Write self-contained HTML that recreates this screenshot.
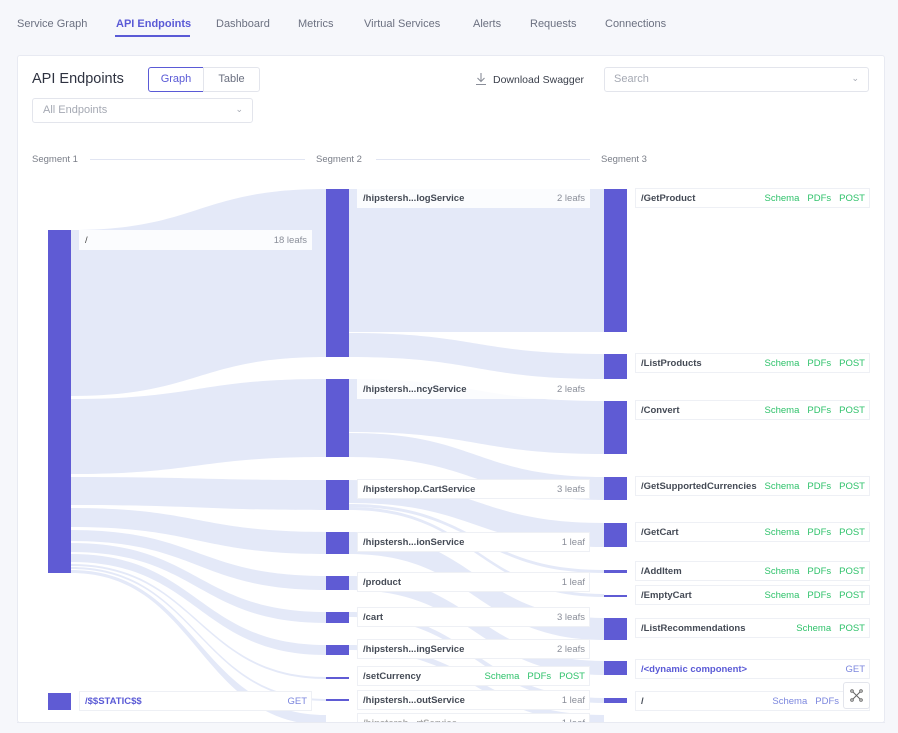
<!DOCTYPE html>
<html><head><meta charset="utf-8">
<style>
*{box-sizing:border-box;margin:0;padding:0}
body{width:898px;height:733px;overflow:hidden;background:#f6f7fb;font-family:"Liberation Sans",sans-serif;position:relative;color:#3a3f4b}
.nav{position:absolute;top:18px;font-size:11px;color:#6b7080}
.nav.on{color:#5a5ad6;font-weight:bold}
.ul{position:absolute;left:115px;top:35px;width:75px;height:2px;background:#5a5ad6}
.card{position:absolute;left:17px;top:55px;width:868px;height:668px;background:#fff;border:1px solid #e8eaf2;border-radius:3px;overflow:hidden}
.a{position:absolute}
.bar{position:absolute;background:#5f5bd4}
.lbl{position:absolute;height:20px;background:#fff;border:1px solid #eef0f5;font-size:9.5px;font-weight:bold;color:#444a55;padding:0 4px 0 5px;display:flex;align-items:center;justify-content:space-between;white-space:nowrap}
.lbl.t{background:rgba(255,255,255,.85);border-color:transparent}
.lbl span.r{font-weight:normal;color:#8a8e99}
.g{font-weight:normal;color:#2fc26b;margin-left:8px}
.b{font-weight:normal;color:#7b86de;margin-left:8px}
.seg{position:absolute;top:154px;font-size:9.5px;color:#7a7e88}
.line{position:absolute;top:159px;height:1px;background:#e1e5f2}
</style></head><body>
<div class="nav" style="left:17px">Service Graph</div>
<div class="nav on" style="left:116px">API Endpoints</div>
<div class="ul"></div>
<div class="nav" style="left:216px">Dashboard</div>
<div class="nav" style="left:298px">Metrics</div>
<div class="nav" style="left:364px">Virtual Services</div>
<div class="nav" style="left:473px">Alerts</div>
<div class="nav" style="left:530px">Requests</div>
<div class="nav" style="left:605px">Connections</div>

<div class="card"></div>
<div class="a" style="left:32px;top:71px;font-size:14.5px;color:#2e3240">API Endpoints</div>
<div class="a" style="left:148px;top:67px;width:56px;height:25px;border:1px solid #5a5ad6;border-radius:3px 0 0 3px;color:#5a5ad6;font-size:11px;text-align:center;line-height:23px">Graph</div>
<div class="a" style="left:203px;top:67px;width:57px;height:25px;border:1px solid #e3e5ec;border-radius:0 3px 3px 0;color:#6b7080;font-size:11px;text-align:center;line-height:23px">Table</div>
<div class="a" style="left:32px;top:98px;width:221px;height:25px;border:1px solid #e3e5ec;border-radius:3px;color:#a5a9b3;font-size:11px;line-height:23px;padding-left:10px">All Endpoints<span style="position:absolute;right:9px;top:-1px;font-size:9px">&#8964;</span></div>
<svg class="a" style="left:474px;top:72px" width="14" height="14" viewBox="0 0 14 14"><path d="M7 1v8M3.5 6l3.5 3.5L10.5 6M2 12.5h10" stroke="#8a8e99" stroke-width="1.1" fill="none"/></svg>
<div class="a" style="left:493px;top:74px;font-size:10.5px;color:#3a3f4b">Download Swagger</div>
<div class="a" style="left:604px;top:67px;width:265px;height:25px;border:1px solid #e3e5ec;border-radius:3px;color:#a5a9b3;font-size:11px;line-height:23px;padding-left:9px">Search<span style="position:absolute;right:9px;top:-1px;font-size:9px">&#8964;</span></div>

<div class="seg" style="left:32px">Segment 1</div>
<div class="line" style="left:90px;width:215px"></div>
<div class="seg" style="left:316px">Segment 2</div>
<div class="line" style="left:376px;width:214px"></div>
<div class="seg" style="left:601px">Segment 3</div>

<svg class="a" style="left:0;top:0" width="898" height="723" viewBox="0 0 898 723">
<g fill="#e4e9f8">
<path d="M71 230C198 230 198 189 326 189L326 357C198 357 198 396 71 396Z"/>
<path d="M71 399C198 399 198 379 326 379L326 457C198 457 198 474 71 474Z"/>
<path d="M71 477C198 477 198 480 326 480L326 510C198 510 198 505 71 505Z"/>
<path d="M71 508C198 508 198 532 326 532L326 554C198 554 198 527 71 527Z"/>
<path d="M71 530C198 530 198 576 326 576L326 590C198 590 198 541 71 541Z"/>
<path d="M71 543C198 543 198 612 326 612L326 623C198 623 198 552 71 552Z"/>
<path d="M71 554C198 554 198 645 326 645L326 655C198 655 198 562 71 562Z"/>
<path d="M71 564C198 564 198 677 326 677L326 679C198 679 198 566 71 566Z"/>
<path d="M71 567C198 567 198 699 326 699L326 701C198 701 198 569 71 569Z"/>
<path d="M71 570C198 570 198 715 326 715L326 725C198 725 198 573 71 573Z"/>
<path d="M349 189L604 189L604 332L349 332Z"/>
<path d="M349 333C476 333 476 354 604 354L604 379C476 379 476 357 349 357Z"/>
<path d="M349 379C476 379 476 401 604 401L604 454C476 454 476 432 349 432Z"/>
<path d="M349 433C476 433 476 477 604 477L604 500C476 500 476 457 349 457Z"/>
<path d="M349 480C476 480 476 523 604 523L604 547C476 547 476 503 349 503Z"/>
<path d="M349 504C476 504 476 570 604 570L604 573C476 573 476 507 349 507Z"/>
<path d="M349 507C476 507 476 594 604 594L604 597C476 597 476 510 349 510Z"/>
<path d="M349 532C476 532 476 618 604 618L604 640C476 640 476 554 349 554Z"/>
<path d="M349 576C476 576 476 661 604 661L604 675C476 675 476 590 349 590Z"/>
<path d="M349 612C476 612 476 698 604 698L604 703C476 703 476 617 349 617Z"/>
<path d="M349 645C476 645 476 715 604 715L604 723C476 723 476 650 349 650Z"/>
</g>
<rect x="886" y="0" width="12" height="723" fill="#f6f7fb"/>
<rect x="0" y="723" width="898" height="10" fill="#f6f7fb"/>
</svg>

<div class="bar" style="left:48px;top:230px;width:23px;height:343px"></div>
<div class="bar" style="left:48px;top:693px;width:23px;height:17px"></div>
<div class="lbl t" style="left:79px;top:230px;width:233px;font-weight:normal;color:#444">/<span class="r">18 leafs</span></div>
<div class="lbl" style="left:79px;top:691px;width:233px;color:#5a5ad6">/$$STATIC$$<span class="b">GET</span></div>

<div class="bar" style="left:326px;top:189px;width:23px;height:168px"></div>
<div class="bar" style="left:326px;top:379px;width:23px;height:78px"></div>
<div class="bar" style="left:326px;top:480px;width:23px;height:30px"></div>
<div class="bar" style="left:326px;top:532px;width:23px;height:22px"></div>
<div class="bar" style="left:326px;top:576px;width:23px;height:14px"></div>
<div class="bar" style="left:326px;top:612px;width:23px;height:11px"></div>
<div class="bar" style="left:326px;top:645px;width:23px;height:10px"></div>
<div class="bar" style="left:326px;top:677px;width:23px;height:2px"></div>
<div class="bar" style="left:326px;top:699px;width:23px;height:2px"></div>

<div class="lbl t" style="left:357px;top:188px;width:233px">/hipstersh...logService<span class="r">2 leafs</span></div>
<div class="lbl t" style="left:357px;top:379px;width:233px">/hipstersh...ncyService<span class="r">2 leafs</span></div>
<div class="lbl" style="left:357px;top:479px;width:233px">/hipstershop.CartService<span class="r">3 leafs</span></div>
<div class="lbl" style="left:357px;top:532px;width:233px">/hipstersh...ionService<span class="r">1 leaf</span></div>
<div class="lbl" style="left:357px;top:572px;width:233px">/product<span class="r">1 leaf</span></div>
<div class="lbl" style="left:357px;top:607px;width:233px">/cart<span class="r">3 leafs</span></div>
<div class="lbl" style="left:357px;top:639px;width:233px">/hipstersh...ingService<span class="r">2 leafs</span></div>
<div class="lbl" style="left:357px;top:666px;width:233px">/setCurrency<span><span class="g">Schema</span><span class="g">PDFs</span><span class="g">POST</span></span></div>
<div class="lbl" style="left:357px;top:690px;width:233px">/hipstersh...outService<span class="r">1 leaf</span></div>
<div class="lbl" style="left:357px;top:713px;width:233px;color:#aaa">/hipstersh...rtService<span class="r">1 leaf</span></div>

<div class="bar" style="left:604px;top:189px;width:23px;height:143px"></div>
<div class="bar" style="left:604px;top:354px;width:23px;height:25px"></div>
<div class="bar" style="left:604px;top:401px;width:23px;height:53px"></div>
<div class="bar" style="left:604px;top:477px;width:23px;height:23px"></div>
<div class="bar" style="left:604px;top:523px;width:23px;height:24px"></div>
<div class="bar" style="left:604px;top:570px;width:23px;height:3px"></div>
<div class="bar" style="left:604px;top:595px;width:23px;height:2px"></div>
<div class="bar" style="left:604px;top:618px;width:23px;height:22px"></div>
<div class="bar" style="left:604px;top:661px;width:23px;height:14px"></div>
<div class="bar" style="left:604px;top:698px;width:23px;height:5px"></div>

<div class="lbl" style="left:635px;top:188px;width:235px">/GetProduct<span><span class="g">Schema</span><span class="g">PDFs</span><span class="g">POST</span></span></div>
<div class="lbl" style="left:635px;top:353px;width:235px">/ListProducts<span><span class="g">Schema</span><span class="g">PDFs</span><span class="g">POST</span></span></div>
<div class="lbl" style="left:635px;top:400px;width:235px">/Convert<span><span class="g">Schema</span><span class="g">PDFs</span><span class="g">POST</span></span></div>
<div class="lbl" style="left:635px;top:476px;width:235px">/GetSupportedCurrencies<span><span class="g" style="margin-left:3px">Schema</span><span class="g">PDFs</span><span class="g">POST</span></span></div>
<div class="lbl" style="left:635px;top:522px;width:235px">/GetCart<span><span class="g">Schema</span><span class="g">PDFs</span><span class="g">POST</span></span></div>
<div class="lbl" style="left:635px;top:561px;width:235px">/AddItem<span><span class="g">Schema</span><span class="g">PDFs</span><span class="g">POST</span></span></div>
<div class="lbl" style="left:635px;top:585px;width:235px">/EmptyCart<span><span class="g">Schema</span><span class="g">PDFs</span><span class="g">POST</span></span></div>
<div class="lbl" style="left:635px;top:618px;width:235px">/ListRecommendations<span><span class="g">Schema</span><span class="g">POST</span></span></div>
<div class="lbl" style="left:635px;top:659px;width:235px;color:#5a5ad6">/&lt;dynamic component&gt;<span class="b">GET</span></div>
<div class="lbl" style="left:635px;top:691px;width:235px;justify-content:flex-start">/<span style="margin-left:auto;margin-right:26px"><span class="b">Schema</span><span class="b">PDFs</span></span></div>
<div class="a" style="left:843px;top:682px;width:27px;height:27px;background:#fff;border:1px solid #e3e5ec;border-radius:3px"><svg width="25" height="25" viewBox="0 0 25 25"><path d="M8 8l9 9M17 8l-9 9" stroke="#666" stroke-width="1"/><circle cx="8" cy="8" r="1.3" fill="#fff" stroke="#666"/><circle cx="17" cy="8" r="1.3" fill="#fff" stroke="#666"/><circle cx="8" cy="17" r="1.3" fill="#fff" stroke="#666"/><circle cx="17" cy="17" r="1.3" fill="#fff" stroke="#666"/></svg></div>
<div class="a" style="left:17px;top:722px;width:868px;height:11px;background:#f6f7fb;border-top:1px solid #e8eaf2"></div>
</body></html>
